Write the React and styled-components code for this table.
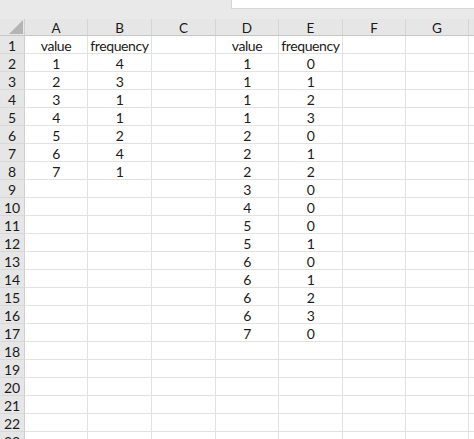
import React from "react";
import styled, { createGlobalStyle } from "styled-components";

const GlobalStyle = createGlobalStyle`
  html, body {
    margin: 0;
    padding: 0;
    background: #ffffff;
    overflow: hidden;
  }
`;

const Page = styled.div`
  width: 474px;
  height: 439px;
  display: flex;
  flex-direction: column;
  overflow: hidden;
  font-family: "Lato", "Liberation Sans", sans-serif;
  color: #1b1b1b;
`;

const TopBar = styled.div`
  height: 19px;
  flex-shrink: 0;
  background: #e9e9e9;
  display: flex;
`;

const FormulaBox = styled.div`
  margin-left: 231px;
  flex: 1;
  height: 8px;
  background: #ffffff;
  border-left: 1px solid #d6d6d6;
  border-bottom: 1px solid #d6d6d6;
`;

const Grid = styled.div`
  display: grid;
  grid-template-columns: 25px 63px 64px 64px 63px 64px 63px 63px 40px;
  grid-template-rows: 17px;
  grid-auto-rows: 18px;
`;

const Corner = styled.div`
  background: #e6e6e6;
  border-right: 1px solid #cfcfcf;
  border-bottom: 1px solid #c6c6c6;
  box-sizing: border-box;
  display: flex;
  align-items: flex-end;
  justify-content: flex-end;
  padding: 0 1px 1px 0;
`;

const Triangle = styled.div`
  width: 0;
  height: 0;
  border-left: 14px solid transparent;
  border-bottom: 14px solid #b4b4b4;
`;

const ColHead = styled.div`
  background: #e6e6e6;
  border-right: 1px solid #d4d4d4;
  border-bottom: 1px solid #c6c6c6;
  box-sizing: border-box;
  display: flex;
  align-items: center;
  justify-content: center;
  font-size: 13.5px;
  padding-top: 2px;
`;

const RowHead = styled.div`
  background: #e6e6e6;
  border-right: 1px solid #cfcfcf;
  border-bottom: 1px solid #d8d8d8;
  box-sizing: border-box;
  display: flex;
  align-items: center;
  justify-content: center;
  font-size: 14px;
  padding-top: 1px;
`;

const Cell = styled.div`
  border-right: 1px solid #e2e2e2;
  border-bottom: 1px solid #e2e2e2;
  box-sizing: border-box;
  display: flex;
  align-items: center;
  justify-content: center;
  font-size: 14px;
  letter-spacing: -0.4px;
  padding-top: 1px;
  white-space: nowrap;
  overflow: hidden;
`;

const columns = ["A", "B", "C", "D", "E", "F", "G", ""];

const left = [
  ["value", "frequency"],
  [1, 4],
  [2, 3],
  [3, 1],
  [4, 1],
  [5, 2],
  [6, 4],
  [7, 1],
];

const rightValues = [1, 1, 1, 1, 2, 2, 2, 3, 4, 5, 5, 6, 6, 6, 6, 7];
const rightFreq = [0, 1, 2, 3, 0, 1, 2, 0, 0, 0, 1, 0, 1, 2, 3, 0];

function cellsFor(row) {
  const i = row - 1;
  const a = left[i] ? left[i][0] : "";
  const b = left[i] ? left[i][1] : "";
  let d = "";
  let e = "";
  if (row === 1) {
    d = "value";
    e = "frequency";
  } else if (rightValues[row - 2] !== undefined) {
    d = rightValues[row - 2];
    e = rightFreq[row - 2];
  }
  return [a, b, "", d, e, "", "", ""];
}

const rows = Array.from({ length: 23 }, (_, i) => i + 1);

export default function App() {
  return (
    <Page>
      <GlobalStyle />
      <TopBar>
        <FormulaBox />
      </TopBar>
      <Grid>
        <Corner>
          <Triangle />
        </Corner>
        {columns.map((c, i) => (
          <ColHead key={"h" + i}>{c}</ColHead>
        ))}
        {rows.map((r) => (
          <React.Fragment key={r}>
            <RowHead>{r}</RowHead>
            {cellsFor(r).map((v, j) => (
              <Cell key={j}>{v}</Cell>
            ))}
          </React.Fragment>
        ))}
      </Grid>
    </Page>
  );
}
